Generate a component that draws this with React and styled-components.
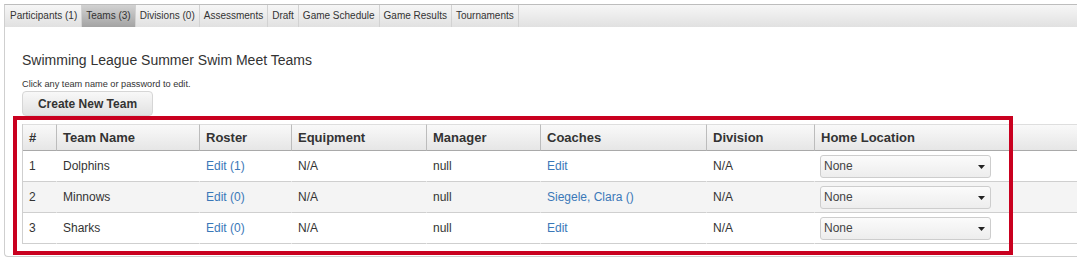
import React from "react";
import styled, { createGlobalStyle } from "styled-components";

const GlobalStyle = createGlobalStyle`
  html, body { margin: 0; padding: 0; background: #fff; overflow: hidden; }
  body { font-family: "Liberation Sans", Arial, sans-serif; color: #333; }
  * { box-sizing: border-box; }
`;

const Page = styled.div`
  position: relative;
  width: 1120px;
  padding: 4px 0 0 4px;
`;

const TabBar = styled.nav`
  display: flex;
  height: 23px;
  border-top: 1px solid #bdbdbd;
  border-left: 1px solid #cfcfcf;
  background: linear-gradient(#f6f6f6, #e1e1e1);
`;

const Tab = styled.div`
  padding: 0 4px 0 ${(p) => (p.$first ? "5px" : "4px")};
  font-size: 10px;
  line-height: 22px;
  color: #333;
  border-right: 1px solid #d2d2d2;
  white-space: nowrap;
  background: ${(p) => (p.$active ? "linear-gradient(#d2d2d2, #a3a3a3)" : "transparent")};
`;

const Panel = styled.section`
  border-left: 1px solid #cfcfcf;
  border-bottom: 1px solid #cfcfcf;
  border-bottom-left-radius: 4px;
  padding: 25px 0 12px 17px;
`;

const Title = styled.h2`
  margin: 0;
  font-size: 14px;
  font-weight: normal;
  line-height: 16px;
  color: #333;
`;

const Hint = styled.p`
  margin: 10px 0 0;
  font-size: 9.2px;
  line-height: 12px;
  color: #333;
`;

const Button = styled.button`
  display: block;
  margin-top: 1px;
  height: 25px;
  width: 131px;
  padding: 0;
  font-family: inherit;
  font-size: 12px;
  font-weight: bold;
  color: #333;
  border: 1px solid #d6d6d6;
  border-radius: 4px;
  background: linear-gradient(#f8f8f8, #e2e2e2);
`;

const Table = styled.table`
  margin-top: 8px;
  width: 1076px;
  table-layout: fixed;
  border-collapse: separate;
  border-spacing: 0;
  border-left: 1px solid #cfcfcf;
  font-size: 12px;
`;

const HeadRow = styled.tr`
  height: 27px;
`;

const Th = styled.th`
  padding: 0 6px;
  text-align: left;
  font-size: 13px;
  font-weight: bold;
  color: #333;
  border-top: 1px solid #dedede;
  border-bottom: 1px solid #a9a9a9;
  border-left: ${(p) => (p.$first ? "none" : "1px solid #bcbcbc")};
  background: linear-gradient(#f9f9f9, #e6e6e6);
  white-space: nowrap;
`;

const Row = styled.tr`
  height: 31px;
  background: ${(p) => (p.$alt ? "#f4f4f4" : "#fff")};
`;

const Td = styled.td`
  padding: 0 6px;
  border-bottom: 1px solid #cfcfcf;
  border-left: ${(p) => (p.$first ? "none" : "1px solid transparent")};
  color: #333;
  white-space: nowrap;
`;

const Link = styled.a`
  color: #3a78b8;
  text-decoration: none;
  cursor: pointer;
`;

const SelectWrap = styled.div`
  position: relative;
  width: 171px;
  height: 23px;
  margin-left: -1px;
`;

const Select = styled.select`
  appearance: none;
  width: 100%;
  height: 100%;
  padding: 0 0 0 3px;
  font-family: inherit;
  font-size: 12px;
  color: #444;
  border: 1px solid #cdcdcd;
  border-radius: 3px;
  background: linear-gradient(#fbfbfb, #ededed);
`;

const Arrow = styled.svg`
  position: absolute;
  right: 6px;
  top: 10px;
  pointer-events: none;
`;

const Annotation = styled.div`
  position: absolute;
  left: 13px;
  top: 116px;
  width: 1000px;
  height: 139px;
  border: 4px solid #c9001f;
  pointer-events: none;
`;

const tabs = [
  "Participants (1)",
  "Teams (3)",
  "Divisions (0)",
  "Assessments",
  "Draft",
  "Game Schedule",
  "Game Results",
  "Tournaments",
];

const columns = [
  { label: "#", width: 33 },
  { label: "Team Name", width: 143 },
  { label: "Roster", width: 92 },
  { label: "Equipment", width: 135 },
  { label: "Manager", width: 114 },
  { label: "Coaches", width: 166 },
  { label: "Division", width: 108 },
  { label: "Home Location" },
];

const teams = [
  { n: 1, name: "Dolphins", roster: "Edit (1)", coaches: "Edit" },
  { n: 2, name: "Minnows", roster: "Edit (0)", coaches: "Siegele, Clara ()" },
  { n: 3, name: "Sharks", roster: "Edit (0)", coaches: "Edit" },
];

function LocationSelect() {
  return (
    <SelectWrap>
      <Select defaultValue="none">
        <option value="none">None</option>
      </Select>
      <Arrow width="7" height="4" viewBox="0 0 7 4">
        <path d="M0 0 H7 L3.5 4 Z" fill="#222" />
      </Arrow>
    </SelectWrap>
  );
}

export default function App() {
  return (
    <>
      <GlobalStyle />
      <Page>
        <TabBar>
          {tabs.map((t, i) => (
            <Tab key={t} $first={i === 0} $active={t === "Teams (3)"}>
              {t}
            </Tab>
          ))}
        </TabBar>
        <Panel>
          <Title>Swimming League Summer Swim Meet Teams</Title>
          <Hint>Click any team name or password to edit.</Hint>
          <Button>Create New Team</Button>
          <Table>
            <colgroup>
              {columns.map((c) => (
                <col key={c.label} style={c.width ? { width: c.width } : undefined} />
              ))}
            </colgroup>
            <thead>
              <HeadRow>
                {columns.map((c, i) => (
                  <Th key={c.label} $first={i === 0}>
                    {c.label}
                  </Th>
                ))}
              </HeadRow>
            </thead>
            <tbody>
              {teams.map((t, i) => (
                <Row key={t.n} $alt={i % 2 === 1}>
                  <Td $first>{t.n}</Td>
                  <Td>{t.name}</Td>
                  <Td>
                    <Link>{t.roster}</Link>
                  </Td>
                  <Td>N/A</Td>
                  <Td>null</Td>
                  <Td>
                    <Link>{t.coaches}</Link>
                  </Td>
                  <Td>N/A</Td>
                  <Td>
                    <LocationSelect />
                  </Td>
                </Row>
              ))}
            </tbody>
          </Table>
        </Panel>
        <Annotation />
      </Page>
    </>
  );
}
